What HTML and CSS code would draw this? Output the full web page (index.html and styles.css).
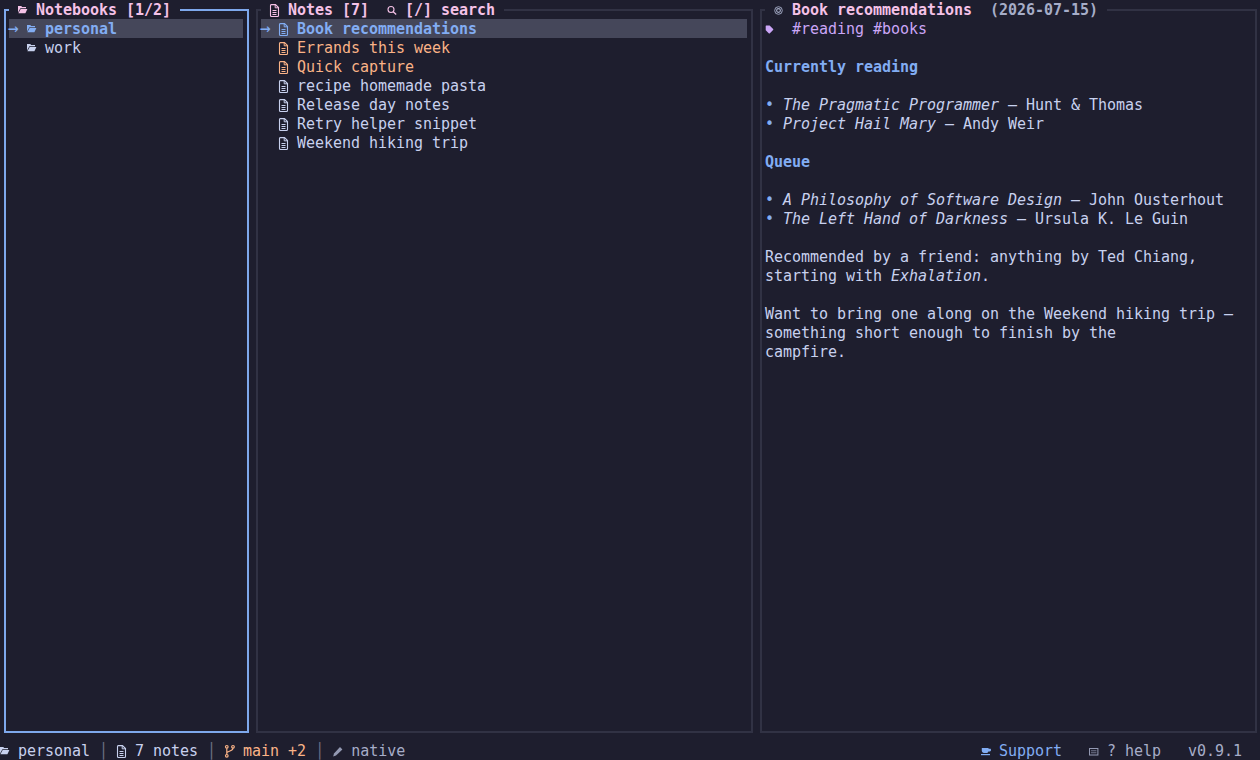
FILE: index.html
```html
<!DOCTYPE html>
<html lang="en">
<head>
  <meta charset="UTF-8">
  <title>Notes</title>
  <link rel="stylesheet" href="styles.css">
</head>
<body>
  <svg class="defs" width="0" height="0">
    <symbol id="folder" viewBox="0 0 9 9" overflow="visible">
      <path d="M0 1h3.200l1 1h3.800v1.200H2.400L0 7.500z"/>
      <path d="M2.700 3.900H9.400L7.400 8.200H.4z"/>
    </symbol>
    <symbol id="doc" viewBox="0 0 9 13" overflow="visible">
      <path d="M1.500.6h4l3 3v7.900a1 1 0 0 1-1 1h-6a1 1 0 0 1-1-1v-10a1 1 0 0 1 1-.9z" fill="none" stroke="currentColor" stroke-width="1.100"/>
      <path d="M5.200.8v3h3M2.500 6.500h4M2.500 8.500h4M2.500 10.500h4" fill="none" stroke="currentColor"/>
    </symbol>
    <symbol id="search" viewBox="0 0 9 9" overflow="visible">
      <circle cx="4" cy="3.500" r="3" fill="none" stroke="currentColor" stroke-width="1.100"/>
      <path d="M6.200 5.800 9.200 8.500" stroke="currentColor" stroke-width="1.300"/>
    </symbol>
    <symbol id="eye" viewBox="0 0 9 9" overflow="visible">
      <circle cx="4.500" cy="4.500" r="3.800" fill="none" stroke="currentColor" stroke-width=".9"/>
      <circle cx="4.500" cy="4.500" r="1.900" fill="none" stroke="currentColor" stroke-width="1.100"/>
    </symbol>
    <symbol id="tag" viewBox="0 0 9 9" overflow="visible">
      <path d="M1.200.4h3.400l3.500 3.500a.9.900 0 0 1 0 1.200L4.900 8.300a.9.900 0 0 1-1.200 0L1 5.500a1 1 0 0 1-.3-.7V.9a.5.500 0 0 1 .5-.5z"/>
    </symbol>
    <symbol id="branch" viewBox="0 0 9 13" overflow="visible">
      <g fill="none" stroke="currentColor" stroke-width="1.200">
        <circle cx="1.800" cy="1.800" r="1.300"/>
        <circle cx="8" cy="1.800" r="1.300"/>
        <circle cx="1.800" cy="10.800" r="1.300"/>
        <path d="M1.800 3.200v6.200M8 3.200c0 3.200-6.200 2.800-6.200 4.800"/>
      </g>
    </symbol>
    <symbol id="pencil" viewBox="0 0 9 9" overflow="visible">
      <path d="M7 0 9.400 2.400 3 8.600.2 9.400 1 6.400z"/>
    </symbol>
    <symbol id="coffee" viewBox="0 0 9 9" overflow="visible">
      <path d="M.8 1h6.700v.8h1.700c.6 0 .8.500.8 1.200s-.4 1.500-1.200 1.500H7.300C7 5.500 6.300 6 5.400 6H3C1.800 6 .8 5 .8 3.800z"/>
      <path d="M0 7h9v1.200H0z"/>
    </symbol>
    <symbol id="keyboard" viewBox="0 0 9 9" overflow="visible">
      <rect x=".5" y="1.500" width="8.400" height="6.500" fill="none" stroke="currentColor"/>
      <path d="M2 3.300h5.400v1H2zM2 5.300h5.400v1H2z" opacity=".7"/>
    </symbol>
  </svg>

  <main class="panes">
    <section class="pane pane-focus">
      <h2 class="pane-title"> <svg class="ic ic-folder"><use href="#folder"/></svg> Notebooks [1/2] </h2>
      <div class="row row-selected"><span class="arrow">→</span> <svg class="ic ic-folder"><use href="#folder"/></svg> personal</div>
      <div class="row">  <svg class="ic ic-folder"><use href="#folder"/></svg> work</div>
    </section>

    <section class="pane">
      <h2 class="pane-title"> <svg class="ic ic-tall"><use href="#doc"/></svg> Notes [7]  <svg class="ic"><use href="#search"/></svg> [/] search </h2>
      <div class="row row-selected"><span class="arrow">→</span> <svg class="ic ic-tall"><use href="#doc"/></svg> Book recommendations</div>
      <div class="row row-pinned">  <svg class="ic ic-tall"><use href="#doc"/></svg> Errands this week</div>
      <div class="row row-pinned">  <svg class="ic ic-tall"><use href="#doc"/></svg> Quick capture</div>
      <div class="row">  <svg class="ic ic-tall"><use href="#doc"/></svg> recipe homemade pasta</div>
      <div class="row">  <svg class="ic ic-tall"><use href="#doc"/></svg> Release day notes</div>
      <div class="row">  <svg class="ic ic-tall"><use href="#doc"/></svg> Retry helper snippet</div>
      <div class="row">  <svg class="ic ic-tall"><use href="#doc"/></svg> Weekend hiking trip</div>
    </section>

    <section class="pane">
      <h2 class="pane-title"> <svg class="ic ic-dim"><use href="#eye"/></svg> Book recommendations  <span class="date">(2026-07-15)</span> </h2>
      <div class="row tags"><svg class="ic"><use href="#tag"/></svg>  #reading #books</div>
      <div class="row"> </div>
      <div class="row heading">Currently reading</div>
      <div class="row"> </div>
      <div class="row"><span class="bullet">•</span> <em>The Pragmatic Programmer</em> — Hunt &amp; Thomas</div>
      <div class="row"><span class="bullet">•</span> <em>Project Hail Mary</em> — Andy Weir</div>
      <div class="row"> </div>
      <div class="row heading">Queue</div>
      <div class="row"> </div>
      <div class="row"><span class="bullet">•</span> <em>A Philosophy of Software Design</em> — John Ousterhout</div>
      <div class="row"><span class="bullet">•</span> <em>The Left Hand of Darkness</em> — Ursula K. Le Guin</div>
      <div class="row"> </div>
      <div class="row">Recommended by a friend: anything by Ted Chiang,</div>
      <div class="row">starting with <em>Exhalation</em>.</div>
      <div class="row"> </div>
      <div class="row">Want to bring one along on the Weekend hiking trip —</div>
      <div class="row">something short enough to finish by the</div>
      <div class="row">campfire.</div>
    </section>
  </main>

  <footer class="status">
    <div class="status-left"><svg class="ic ic-folder"><use href="#folder"/></svg> personal <span class="sep">│</span> <svg class="ic ic-tall"><use href="#doc"/></svg> 7 notes <span class="sep">│</span> <span class="git"><svg class="ic ic-tall"><use href="#branch"/></svg> main +2</span> <span class="sep">│</span> <span class="muted"><svg class="ic ic-gray"><use href="#pencil"/></svg> native</span></div>
    <div class="status-right"><span class="support"><svg class="ic"><use href="#coffee"/></svg> Support</span>   <span class="muted"><svg class="ic ic-gray"><use href="#keyboard"/></svg> ? help   v0.9.1</span>  </div>
  </footer>
</body>
</html>
```

FILE: styles.css
```css
html, body {
  margin: 0;
  height: 100%;
}
body {
  display: flex;
  flex-direction: column;
  overflow: hidden;
  background-color: #1e1e2e;
  color: #c8d1ee;
  font-family: "DejaVu Sans Mono", "Liberation Mono", monospace;
  font-size: 15px;
  letter-spacing: -0.03px;
  line-height: 21px;
}
.defs {
  position: absolute;
}
.panes {
  display: grid;
  grid-template-columns: 252px 504px 504px;
  height: 741px;
}
.pane {
  margin: 9px 3px 8px 4px;
  padding: 0 4px 0 3px;
  border: 2px solid #313244;
  min-width: 0;
}
.pane-focus {
  border-color: #7ea8ec;
}
.pane-title {
  width: fit-content;
  height: 19px;
  margin: -11px 0 0;
  background-color: #1e1e2e;
  color: #f5c2e7;
  font-size: inherit;
  font-weight: bold;
  white-space: pre;
}
.date {
  color: #a6adc8;
}
.row {
  height: 19px;
  white-space: pre;
}
.row-selected {
  background-color: #45475a;
  color: #82adf3;
  font-weight: bold;
}
.row-pinned {
  color: #fab387;
}
.arrow {
  display: inline-block;
  width: 9px;
  font-size: 18px;
  font-weight: normal;
  line-height: 0;
  text-indent: -1px;
}
.tags {
  color: #cba6f7;
}
.heading {
  color: #82adf3;
  font-weight: bold;
}
.bullet {
  color: #82adf3;
}
.ic {
  display: inline-block;
  width: 9px;
  height: 9px;
  vertical-align: 0;
  fill: currentColor;
  overflow: visible;
}
.ic-folder {
  vertical-align: 1px;
}
.ic-tall {
  height: 13px;
  vertical-align: -2px;
}
.ic-dim {
  color: #a6adc8;
}
.ic-gray {
  color: #9399b2;
}
.status {
  display: flex;
  justify-content: space-between;
  height: 19px;
  white-space: pre;
}
.sep {
  color: #6c7086;
}
.git {
  color: #fab387;
}
.support {
  color: #82adf3;
}
.muted {
  color: #a6adc8;
}
```
